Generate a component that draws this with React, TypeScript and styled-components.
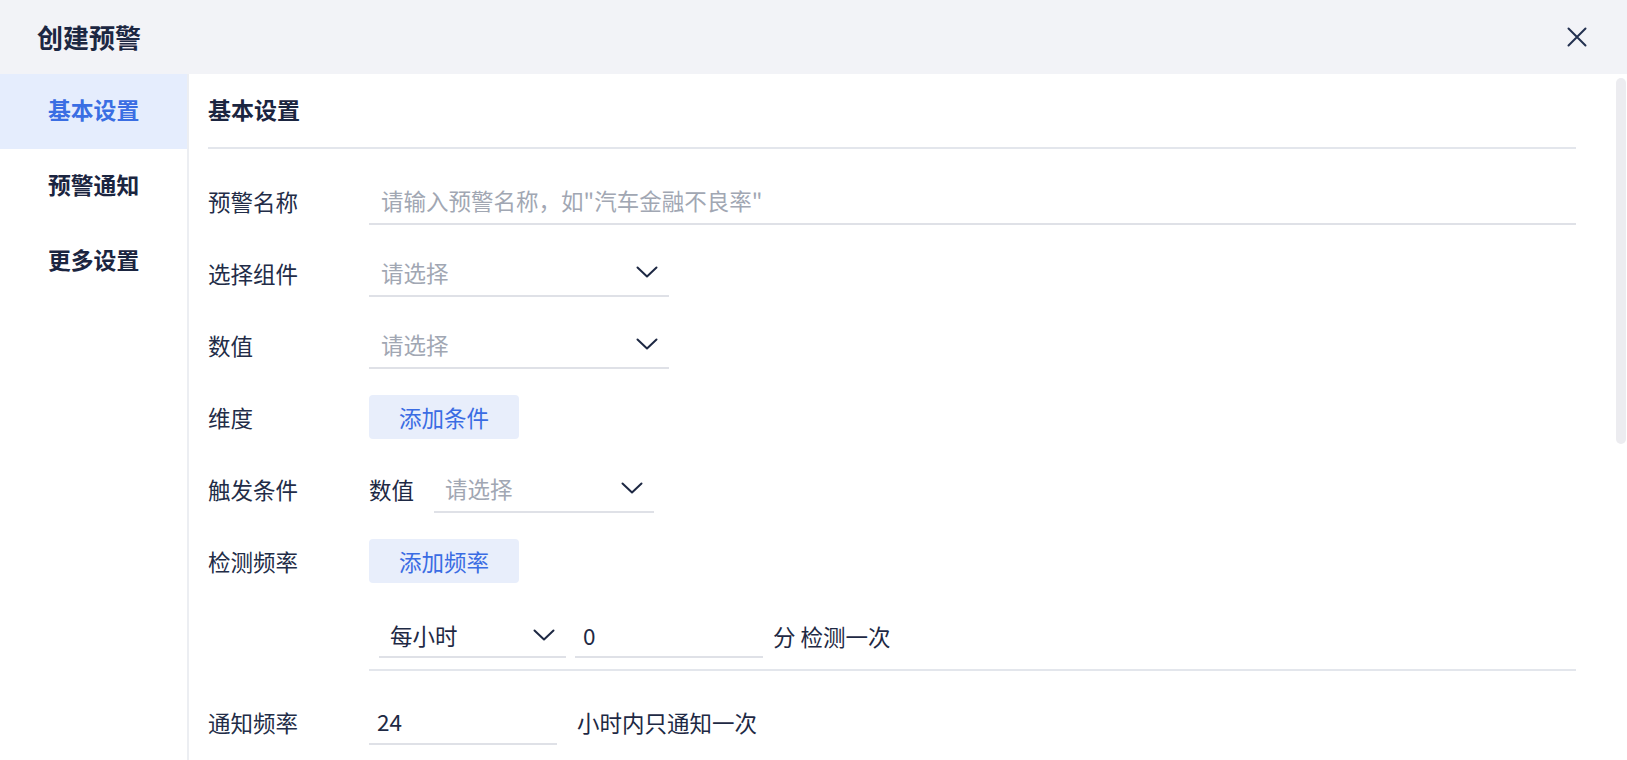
import React from 'react';
import styled, { createGlobalStyle } from 'styled-components';

const GlobalStyle = createGlobalStyle`
    html, body {
        margin: 0;
        padding: 0;
        background: #ffffff;
        overflow: hidden;
    }
    * {
        box-sizing: border-box;
    }
    body {
        font-family: 'Noto Sans CJK SC', 'Noto Sans', sans-serif;
        color: #1e2944;
    }
`;

const Dialog = styled.div`
    width: 100vw;
    height: 760px;
    display: flex;
    flex-direction: column;
    background: #fff;
`;

const Header = styled.div`
    height: 74px;
    flex-shrink: 0;
    background: #f2f3f7;
    display: flex;
    align-items: center;
    justify-content: space-between;
    padding: 0 39px 0 37px;
`;

const Title = styled.h2`
    margin: 0;
    font-size: 26px;
    font-weight: 700;
    color: #1c2742;
    line-height: 1;
`;

const CloseButton = styled.button`
    border: none;
    background: none;
    padding: 0;
    width: 22px;
    height: 22px;
    display: flex;
    align-items: center;
    justify-content: center;
    cursor: pointer;
    color: #233050;
`;

const Body = styled.div`
    flex: 1;
    display: flex;
    min-height: 0;
`;

const Sidebar = styled.nav`
    width: 189px;
    flex-shrink: 0;
    border-right: 2px solid #eceef2;
    display: flex;
    flex-direction: column;
`;

const NavItem = styled.div<{ $active?: boolean }>`
    height: 75px;
    display: flex;
    align-items: center;
    padding: 0 0 5px 48px;
    font-size: 22.8px;
    font-weight: 700;
    color: ${(p) => (p.$active ? '#3a6ee3' : '#1b2540')};
    background: ${(p) => (p.$active ? '#e5edfd' : 'transparent')};
    cursor: pointer;
`;

const Main = styled.div`
    flex: 1;
    position: relative;
    padding: 0 51px 0 19px;
    overflow: hidden;
`;

const ScrollThumb = styled.div`
    position: absolute;
    top: 4px;
    right: 1px;
    width: 10px;
    height: 366px;
    border-radius: 5px;
    background: #ececf0;
`;

const SectionTitle = styled.div`
    height: 75px;
    display: flex;
    align-items: center;
    padding-bottom: 4px;
    font-size: 23px;
    font-weight: 700;
    color: #1b2540;
    border-bottom: 2px solid #e3e6ec;
`;

const Form = styled.div`
    display: flex;
    flex-direction: column;
    padding-top: 28px;
`;

const Row = styled.div<{ $gap?: number; $h?: number }>`
    display: flex;
    align-items: center;
    height: ${(p) => p.$h ?? 48}px;
    margin-top: ${(p) => p.$gap ?? 24}px;
    &:first-child {
        margin-top: 0;
    }
`;

const Label = styled.label`
    width: 161px;
    flex-shrink: 0;
    font-size: 22.5px;
    color: #222c47;
`;

const Indent = styled.div`
    width: 171px;
    flex-shrink: 0;
`;

const TextInput = styled.input<{ $width?: number; $pad?: number }>`
    height: 100%;
    ${(p) => (p.$width ? `width: ${p.$width}px;` : 'flex: 1;')}
    border: none;
    border-bottom: 2px solid #dfe1e7;
    outline: none;
    padding: 0 0 0 ${(p) => p.$pad ?? 12}px;
    font-family: inherit;
    font-size: 22.5px;
    color: #1e2944;
    background: transparent;

    &::placeholder {
        color: #a1a7b3;
    }
`;

const Select = styled.div<{ $width: number; $pad?: number }>`
    width: ${(p) => p.$width}px;
    height: 100%;
    flex-shrink: 0;
    display: flex;
    align-items: center;
    justify-content: space-between;
    padding: 0 11px 0 ${(p) => p.$pad ?? 12}px;
    border-bottom: 2px solid #dfe1e7;
    font-size: 22.5px;
    cursor: pointer;
`;

const SelectText = styled.span<{ $placeholder?: boolean }>`
    color: ${(p) => (p.$placeholder ? '#a1a7b3' : '#1e2944')};
`;

const AddButton = styled.button`
    width: 150px;
    height: 44px;
    border: none;
    border-radius: 4px;
    background: #e8eefb;
    color: #3a6ce3;
    font-family: inherit;
    font-size: 22.5px;
    cursor: pointer;
`;

const Text = styled.span<{ $ml?: number; $mr?: number }>`
    font-size: 22.5px;
    color: #1e2944;
    margin-left: ${(p) => p.$ml ?? 0}px;
    margin-right: ${(p) => p.$mr ?? 0}px;
    white-space: nowrap;
`;

const SubDivider = styled.div`
    height: 2px;
    margin: 11px 0 0 161px;
    background: #e3e6ec;
`;

const Chevron = () => (
    <svg width="22" height="12" viewBox="0 0 22 12" fill="none">
        <polyline points="1.5,1.5 11,10.5 20.5,1.5" stroke="#1d2843" strokeWidth="2" strokeLinecap="round" strokeLinejoin="round" />
    </svg>
);

const CloseIcon = () => (
    <svg width="20" height="20" viewBox="0 0 20 20" fill="none">
        <path d="M1.5 1.5 L18.5 18.5 M18.5 1.5 L1.5 18.5" stroke="currentColor" strokeWidth="2" strokeLinecap="round" />
    </svg>
);

interface DropdownProps {
    width: number;
    value?: string;
    placeholder?: string;
    pad?: number;
}

const Dropdown: React.FC<DropdownProps> = ({ width, value, placeholder = '请选择', pad }) => (
    <Select $width={width} $pad={pad}>
        <SelectText $placeholder={!value}>{value || placeholder}</SelectText>
        <Chevron />
    </Select>
);

const navItems = ['基本设置', '预警通知', '更多设置'];

const App: React.FC = () => {
    const [active, setActive] = React.useState(0);

    return (
        <Dialog>
            <GlobalStyle />
            <Header>
                <Title>创建预警</Title>
                <CloseButton aria-label="关闭">
                    <CloseIcon />
                </CloseButton>
            </Header>
            <Body>
                <Sidebar>
                    {navItems.map((item, i) => (
                        <NavItem key={item} $active={i === active} onClick={() => setActive(i)}>
                            {item}
                        </NavItem>
                    ))}
                </Sidebar>
                <Main>
                    <ScrollThumb />
                    <SectionTitle>基本设置</SectionTitle>
                    <Form>
                        <Row>
                            <Label>预警名称</Label>
                            <TextInput placeholder='请输入预警名称，如"汽车金融不良率"' />
                        </Row>
                        <Row>
                            <Label>选择组件</Label>
                            <Dropdown width={300} />
                        </Row>
                        <Row>
                            <Label>数值</Label>
                            <Dropdown width={300} />
                        </Row>
                        <Row>
                            <Label>维度</Label>
                            <AddButton>添加条件</AddButton>
                        </Row>
                        <Row>
                            <Label>触发条件</Label>
                            <Text $mr={20}>数值</Text>
                            <Dropdown width={220} pad={11} />
                        </Row>
                        <Row>
                            <Label>检测频率</Label>
                            <AddButton>添加频率</AddButton>
                        </Row>
                        <Row $gap={29} $h={44}>
                            <Indent />
                            <Dropdown width={187} value="每小时" pad={11} />
                            <TextInput $width={188} $pad={8} defaultValue="0" style={{ marginLeft: 9 }} />
                            <Text $ml={10}>分 检测一次</Text>
                        </Row>
                        <SubDivider />
                        <Row $gap={28} $h={46}>
                            <Label>通知频率</Label>
                            <TextInput $width={188} $pad={8} defaultValue="24" />
                            <Text $ml={20}>小时内只通知一次</Text>
                        </Row>
                    </Form>
                </Main>
            </Body>
        </Dialog>
    );
};

export default App;
